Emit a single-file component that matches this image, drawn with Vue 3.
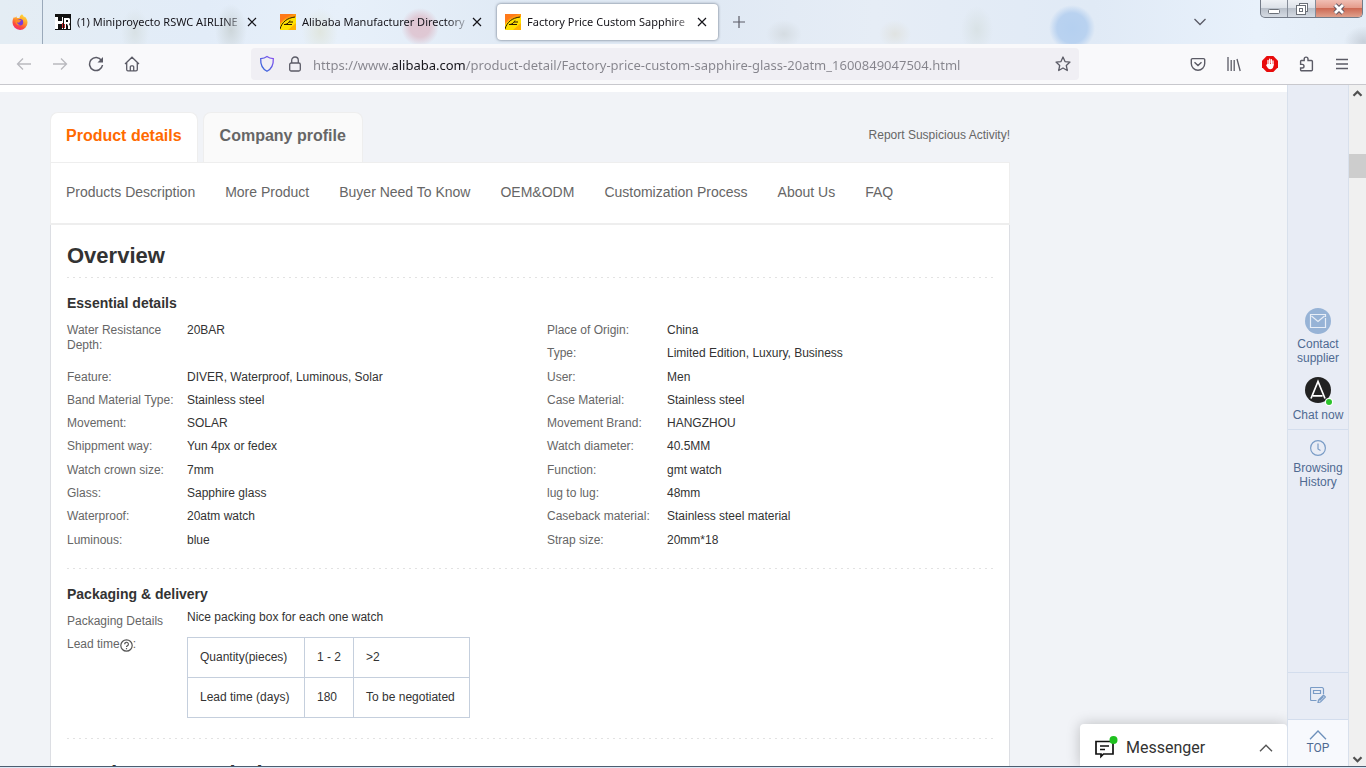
<script setup>
import { ref } from 'vue'

const tabs = [
  { title: '(1) Miniproyecto RSWC AIRLINE', icon: 'hr', active: false },
  { title: 'Alibaba Manufacturer Directory', icon: 'ali', active: false },
  { title: 'Factory Price Custom Sapphire', icon: 'ali', active: true },
]
const url = ref('https://www.alibaba.com/product-detail/Factory-price-custom-sapphire-glass-20atm_1600849047504.html')

const sections = ['Products Description', 'More Product', 'Buyer Need To Know', 'OEM&ODM', 'Customization Process', 'About Us', 'FAQ']

const leftSpecs = [
  ['Water Resistance Depth:', '20BAR', true],
  ['Feature:', 'DIVER, Waterproof, Luminous, Solar'],
  ['Band Material Type:', 'Stainless steel'],
  ['Movement:', 'SOLAR'],
  ['Shippment way:', 'Yun 4px or fedex'],
  ['Watch crown size:', '7mm'],
  ['Glass:', 'Sapphire glass'],
  ['Waterproof:', '20atm watch'],
  ['Luminous:', 'blue'],
]
const rightSpecs = [
  ['Place of Origin:', 'China'],
  ['Type:', 'Limited Edition, Luxury, Business'],
  ['User:', 'Men'],
  ['Case Material:', 'Stainless steel'],
  ['Movement Brand:', 'HANGZHOU'],
  ['Watch diameter:', '40.5MM'],
  ['Function:', 'gmt watch'],
  ['lug to lug:', '48mm'],
  ['Caseback material:', 'Stainless steel material'],
  ['Strap size:', '20mm*18'],
]
</script>

<template>
  <div class="window">
    <header class="tabstrip">
      <button class="view" aria-label="Firefox View">
        <svg width="16" height="16" viewBox="0 0 16 16">
          <defs>
            <linearGradient id="fox" x1="0.8" y1="0" x2="0.3" y2="1">
              <stop offset="0" stop-color="#ffe23c" />
              <stop offset="0.45" stop-color="#ff9a2a" />
              <stop offset="0.75" stop-color="#ff4a3c" />
              <stop offset="1" stop-color="#f02a78" />
            </linearGradient>
          </defs>
          <path d="M10 0.3c1 .8 1.800 1.900 2 2.900.5-.1.700-.4.700-.8 1.700 1.500 2.800 3.600 2.800 6A7.500 7.500 0 0 1 .5 8.500c0-2.300.6-4.200 1.700-5.700l.5 1.400C3.400 3.300 4 2.800 4.600 2.600l.2 1.500c1-.3 1.800-.2 2.600.1C7.600 2.400 8.700 1 10 .3z" fill="url(#fox)" />
          <circle cx="8" cy="8.200" r="3.200" fill="#7a3bd8" />
          <path d="M3.500 6c1.200-.9 2.600-1 4-.2 1.200.2 1.700.7 1.800 1.200-1 .2-1.500.4-1.700 1.200-.8.6-2 .6-2.600-.1.200 1.900 1.500 2.800 3.200 2.800-2.600 1.400-5.300-1-4.700-4.900z" fill="#ff8a28" />
        </svg>
      </button>
      <div class="tabs">
        <div v-for="tab in tabs" :key="tab.title" class="tab" :class="{ active: tab.active }">
          <svg v-if="tab.icon === 'hr'" width="16" height="16" viewBox="0 0 16 16">
            <path d="M0 0h16v16H0z" fill="#111" />
            <path d="M0 3h3v4h4V3h1v12H7v-5H3v5H0z" fill="#fff" />
            <path d="M9 4h5l1 1v4l-1 1 1 2v3h-2v-3l-1-2h-1v5H9zM11 6v2h2V6z" fill="#fff" fill-rule="evenodd" />
            <path d="M7 9h1v5H7zM9 10h1v4H9z" fill="#c22f2f" />
          </svg>
          <svg v-else width="16" height="16" viewBox="0 0 16 16">
            <path d="M0 0h16v16H0z" fill="#ff9810" />
            <path d="M0 16V11C3 6 9 3 16 3v13z" fill="#ffe000" />
            <path d="M0 0h14C8 2 3 5 0 9z" fill="#ff7a1a" />
            <path d="M16 9v7H8z" fill="#ffb400" />
            <path d="M0 15C2 8 7 4 15 3M4 10.500h8M5 10.500C8 10 9 8 10 6.500M9 8h4" fill="none" stroke="#2a1600" stroke-width="1" />
          </svg>
          <span class="title">{{ tab.title }}</span>
          <button class="close" :aria-label="'Close ' + tab.title">
            <svg width="10" height="10" viewBox="0 0 10 10"><path d="M1 1l8 8M9 1L1 9" stroke="#15141a" stroke-width="1.200" /></svg>
          </button>
        </div>
        <button class="plus" aria-label="New tab">
          <svg width="12" height="12" viewBox="0 0 12 12"><path d="M6 0v12M0 6h12" stroke="#5b5b66" stroke-width="1.200" /></svg>
        </button>
      </div>
      <button class="all" aria-label="List all tabs">
        <svg width="14" height="8" viewBox="0 0 14 8"><path d="M1.500 1L7 6.500 12.500 1" fill="none" stroke="#5b5b66" stroke-width="1.300" /></svg>
      </button>
      <div class="controls">
        <button aria-label="Minimize">
          <svg width="14" height="14" viewBox="0 0 14 14"><rect x="1.500" y="7.500" width="11" height="4" rx="1" fill="#fff" stroke="#6b7078" /></svg>
        </button>
        <button aria-label="Restore">
          <svg width="14" height="14" viewBox="0 0 14 14"><g fill="#fff" stroke="#6b7078"><rect x="4.500" y="1.500" width="8" height="8" /><rect x="1.500" y="3.500" width="9" height="9" /><rect x="4.500" y="6.500" width="3" height="3" /></g></svg>
        </button>
        <button class="exit" aria-label="Close window">
          <svg width="14" height="12" viewBox="0 0 14 12"><path d="M3 2l8 8M11 2l-8 8" stroke="#5f5560" stroke-width="4.600" /><path d="M3 2l8 8M11 2l-8 8" stroke="#fff" stroke-width="2.800" /></svg>
        </button>
      </div>
    </header>

    <nav class="toolbar" aria-label="Browser toolbar">
      <div class="group">
        <button aria-label="Back"><svg width="16" height="16" viewBox="0 0 16 16" class="dim"><path d="M15 8H1.500M7 2.500L1.500 8 7 13.500" /></svg></button>
        <button aria-label="Forward"><svg width="16" height="16" viewBox="0 0 16 16" class="dim"><path d="M1 8h13.500M9 2.500L14.500 8 9 13.500" /></svg></button>
        <button aria-label="Reload"><svg width="16" height="16" viewBox="0 0 16 16"><path d="M13.500 4.500A6.500 6.500 0 1 0 14.500 9" stroke-width="1.500" /><path d="M15 1v5.500H9.500z" fill="#5b5b66" stroke="none" /></svg></button>
        <button aria-label="Home"><svg width="16" height="16" viewBox="0 0 16 16"><path d="M1 8L8 1.200 15 8M2.700 6.500v7a1.300 1.300 0 0 0 1.300 1.300h8a1.300 1.300 0 0 0 1.300-1.300v-7M6.300 14.500v-3.700a1 1 0 0 1 1-1h1.400a1 1 0 0 1 1 1v3.700" /></svg></button>
      </div>
      <div class="address">
        <svg width="16" height="18" viewBox="0 0 16 18"><defs><linearGradient id="shield" x1="0" y1="1" x2="1" y2="0"><stop offset="0" stop-color="#2a6ad8" /><stop offset="1" stop-color="#8a50f0" /></linearGradient></defs><path d="M8 1.500C10 3 12 3.500 14.300 3.700c.3 6-1.500 10-6.300 12.600C3.200 13.700 1.400 9.700 1.700 3.700 4 3.500 6 3 8 1.500z" style="stroke: url(#shield)" /></svg>
        <svg width="14" height="16" viewBox="0 0 14 16"><rect x="1.700" y="7" width="10.600" height="8" rx="1.500" /><path d="M3.700 7V4.300a3.300 3.300 0 0 1 6.600 0V7" /></svg>
        <input v-model="url" type="text" aria-label="Address" spellcheck="false" />
        <button aria-label="Bookmark this page"><svg width="16" height="16" viewBox="0 0 16 16"><path d="M8 1l2 4.600 5 .5-3.700 3.400 1 5L8 12l-4.300 2.500 1-5L1 6.100l5-.5z" stroke-linejoin="round" /></svg></button>
      </div>
      <div class="group">
        <button aria-label="Save to Pocket"><svg width="16" height="16" viewBox="0 0 16 16"><path d="M2.500 2.600h11a1.200 1.200 0 0 1 1.200 1.200V7.500a6.700 6.700 0 0 1-13.400 0V3.800a1.200 1.200 0 0 1 1.200-1.200zM4.500 6.200L8 9.500l3.500-3.300" stroke-width="1.400" /></svg></button>
        <button aria-label="Library"><svg width="16" height="16" viewBox="0 0 16 16"><path d="M2 1v14M5.200 4v11M8.200 4v11M11 3l3.200 12" /></svg></button>
        <button aria-label="Ad blocker"><svg width="16" height="16" viewBox="0 0 16 16"><path d="M4.700 0h6.600L16 4.700v6.600L11.300 16H4.700L0 11.300V4.700z" fill="#e80c0c" stroke="none" /><path d="M6 9V4.500M7.700 8V3.200M9.400 8V3.700M11 9V5" stroke="#fff" stroke-width="1.300" stroke-linecap="round" /><path d="M5.400 8h6.200c0 3-.6 5.200-3.200 5.200-2 0-3-1.400-4.400-4.200z" fill="#fff" stroke="none" /></svg></button>
        <button aria-label="Extensions"><svg width="16" height="16" viewBox="0 0 16 16"><path d="M2.600 7.500V5.300a.8.8 0 0 1 .8-.8h2.800V3a1.900 1.900 0 0 1 3.800 0v1.500h3.400a1 1 0 0 1 1 1v8.300a1 1 0 0 1-1 1H3.600a1 1 0 0 1-1-1V12h1.600a1.800 1.800 0 0 0 0-3.600H2.600z" stroke-width="1.400" /></svg></button>
        <button aria-label="Menu"><svg width="16" height="16" viewBox="0 0 16 16"><path d="M2 3.500h12M2 8h12M2 12.500h12" /></svg></button>
      </div>
    </nav>

    <div class="viewport">
      <main class="page">
        <div class="strip"></div>
        <div class="product">
          <div class="heads">
            <button class="head on">Product details</button>
            <button class="head">Company profile</button>
            <a href="#report" class="report">Report Suspicious Activity!</a>
          </div>
          <nav class="sections" aria-label="Product sections">
            <a v-for="s in sections" :key="s" href="#overview">{{ s }}</a>
          </nav>
          <article class="details">
            <h1>Overview</h1>
            <hr />
            <h2>Essential details</h2>
            <div class="specs">
              <dl>
                <div v-for="[name, value, tall] in leftSpecs" :key="name" class="spec" :class="{ tall }">
                  <dt>{{ name }}</dt><dd>{{ value }}</dd>
                </div>
              </dl>
              <dl>
                <div v-for="[name, value] in rightSpecs" :key="name" class="spec">
                  <dt>{{ name }}</dt><dd>{{ value }}</dd>
                </div>
              </dl>
            </div>
            <hr />
            <h2 class="packing">Packaging &amp; delivery</h2>
            <div class="pack">
              <span class="label">Packaging Details</span>
              <span>Nice packing box for each one watch</span>
            </div>
            <div class="lead">
              <span class="label">Lead time<svg width="13" height="13" viewBox="0 0 13 13"><circle cx="6.500" cy="6.500" r="5.700" fill="none" stroke="#555" stroke-width="1.200" /><path d="M4.600 5.200a1.900 1.900 0 1 1 2.700 1.700c-.6.3-.8.6-.8 1.200M6.500 9v1.300" fill="none" stroke="#555" stroke-width="1.200" /></svg>:</span>
              <table>
                <tbody>
                  <tr><td>Quantity(pieces)</td><td>1 - 2</td><td>&gt;2</td></tr>
                  <tr><td>Lead time (days)</td><td>180</td><td>To be negotiated</td></tr>
                </tbody>
              </table>
            </div>
            <hr />
            <h1 class="next">Products Description</h1>
          </article>
        </div>
        <button class="messenger">
          <svg width="24" height="24" viewBox="0 0 24 24"><path d="M2 5.500h17V18H9.500L7 20.500V18H2zM6 10h9M6 13.500h5" fill="none" stroke="#111" stroke-width="1.700" /><circle cx="19.500" cy="4" r="4" fill="#1fc11f" /></svg>
          <span>Messenger</span>
          <svg width="14" height="8" viewBox="0 0 14 8"><path d="M1 7.300L7 1.300l6 6" fill="none" stroke="#555" stroke-width="1.400" /></svg>
        </button>
      </main>

      <aside class="rail">
        <a href="#contact" class="contact">
          <svg width="26" height="26" viewBox="0 0 26 26"><circle cx="13" cy="13" r="13" fill="#97b3d6" /><path d="M20.500 10v9.500h-15v-13h15V9M6.500 8l6.500 5.500L19.500 8" fill="none" stroke="#e8eef7" stroke-width="1.200" /></svg>
          Contact supplier
        </a>
        <a href="#chat" class="chat">
          <svg width="30" height="29" viewBox="0 0 30 29"><circle cx="15" cy="13" r="13" fill="#222" /><path d="M8 21.500L15 4.500l7 17M10 18.800h9.500" fill="none" stroke="#fff" stroke-width="1.700" /><circle cx="26" cy="25" r="4" fill="#fff" /><circle cx="26" cy="25" r="3" fill="#2cc32c" /></svg>
          Chat now
        </a>
        <a href="#history" class="history">
          <svg width="16" height="16" viewBox="0 0 16 16"><circle cx="8" cy="8" r="7.400" fill="none" stroke="#7a9cc6" stroke-width="1.200" /><path d="M8 3.500V9l2.500 1.500" fill="none" stroke="#7a9cc6" stroke-width="1.200" /></svg>
          Browsing History
        </a>
        <a href="#feedback" class="note" aria-label="Feedback">
          <svg width="16" height="16" viewBox="0 0 16 16"><path d="M6.500 13.500h-5a1 1 0 0 1-1-1v-11a1 1 0 0 1 1-1h10.500a2 2 0 0 1 1.500 1.500V7M3.500 3.500h7v3h-7zM8 15.500l.5-2.500 5-5 2 2-5 5zM9.500 13.500l4-4" fill="none" stroke="#7a9cc6" stroke-width="1.200" /></svg>
        </a>
        <a href="#top" class="top">
          <svg width="18" height="10" viewBox="0 0 18 10"><path d="M1 9.300L9 1l8 8.300" fill="none" stroke="#6d90bb" stroke-width="1.300" /></svg>
          TOP
        </a>
      </aside>

      <div class="scroll" aria-hidden="true">
        <svg width="11" height="7" viewBox="0 0 11 7"><path d="M1.500 5.800l4-4 4 4" fill="none" stroke="#505050" stroke-width="2.200" /></svg>
        <div class="thumb"></div>
        <svg width="11" height="7" viewBox="0 0 11 7"><path d="M1.500 1.200l4 4 4-4" fill="none" stroke="#505050" stroke-width="2.200" /></svg>
      </div>
    </div>
    <footer class="edge"></footer>
  </div>
</template>

<style>
body {
  margin: 0;
  overflow: hidden;
}
</style>

<style scoped>
.window {
  height: 100vh;
  display: flex;
  flex-direction: column;
  overflow: hidden;
  font: 12px/15px "Liberation Sans", Arial, sans-serif;
  color: #333;
}
.window * {
  box-sizing: border-box;
}
button {
  font: inherit;
  color: inherit;
  border: 0;
  padding: 0;
  background: none;
}
a {
  color: inherit;
  text-decoration: none;
}
svg {
  flex: none;
}

.tabstrip {
  flex: none;
  height: 44px;
  display: flex;
  font: 11px/16px "Noto Sans", "Open Sans", sans-serif;
  color: #15141a;
  background:
    radial-gradient(circle at 1072px 28px, #b5d0f0 0, #b9d2f0 15px, transparent 23px),
    radial-gradient(circle at 420px 27px, #dfc6d2 0, #dfc8d4 10px, transparent 19px),
    radial-gradient(ellipse 16px 26px at 231px 30px, #cdd6da 0, transparent 100%),
    radial-gradient(ellipse 14px 24px at 135px 32px, #d8e1e5 0, transparent 100%),
    radial-gradient(ellipse 18px 24px at 320px 32px, #e0e6e0 0, transparent 100%),
    radial-gradient(ellipse 18px 14px at 784px 34px, #d5dce2 0, transparent 100%),
    radial-gradient(ellipse 16px 14px at 895px 34px, #e0e3e2 0, transparent 100%),
    radial-gradient(ellipse 16px 24px at 977px 30px, #d9e2e6 0, transparent 100%),
    radial-gradient(ellipse 20px 16px at 1364px 42px, #c8d0da 0, transparent 100%),
    linear-gradient(90deg, #e4edf4 0, #e2ecf8 15%, #e7f0fa 25%, #dfe9f4 40%, #e0e9f4 52%, #e6edf6 64%, #e0eaf6 80%, #e8f1fb 92%, #e4edf7 100%);
}
.view {
  flex: none;
  width: 43px;
  padding: 0 3px 0 0;
  border-right: 1px solid #9aa9ba;
  display: flex;
  align-items: center;
  justify-content: center;
}
.tabs {
  flex: 1;
  min-width: 0;
  display: flex;
  gap: 4px;
  padding: 4px;
}
.tab {
  flex: 0 1 221px;
  min-width: 0;
  height: 36px;
  padding: 0 11px 0 8px;
  border-radius: 4px;
  display: flex;
  align-items: center;
}
.tab.active {
  background: #fff;
  box-shadow: 0 0 3px #5f6a7a;
}
.title {
  flex: 1;
  min-width: 0;
  margin-left: 6px;
  overflow: hidden;
  white-space: nowrap;
  mask-image: linear-gradient(to left, transparent 0, #000 24px);
}
.close {
  flex: none;
  width: 10px;
  height: 16px;
  display: flex;
  align-items: center;
}
.plus {
  flex: none;
  width: 34px;
  height: 36px;
  display: flex;
  align-items: center;
  justify-content: center;
}
.all {
  flex: none;
  width: 36px;
  margin-right: 42px;
}
.controls {
  flex: none;
  width: 103px;
  height: 18px;
  margin-right: 3px;
  display: flex;
  border: 1px solid #737b88;
  border-top: 0;
  border-radius: 0 0 5px 5px;
  overflow: hidden;
  background: linear-gradient(#eef1f5 0, #dde2e9 45%, #b9c0ca 50%, #d5dbe3 100%);
}
.controls button {
  flex: 27;
  display: flex;
  align-items: center;
  justify-content: center;
  border-right: 1px solid #858c98;
}
.controls .exit {
  flex: 47;
  border: 0;
  background: linear-gradient(#f0bfb4 0, #e59c8c 45%, #cd6a54 50%, #e0a08c 100%);
}

.toolbar {
  flex: none;
  height: 41px;
  padding: 0 6px;
  display: flex;
  align-items: center;
  background: #f9f9fb;
  border-bottom: 1px solid #c8c8cd;
}
.toolbar svg {
  fill: none;
  stroke: #5b5b66;
  stroke-width: 1.3;
}
.toolbar .dim {
  stroke: #b9b9be;
}
.group {
  flex: none;
  display: flex;
}
.group button {
  width: 36px;
  height: 32px;
  display: flex;
  align-items: center;
  justify-content: center;
}
.address {
  flex: 1;
  min-width: 0;
  height: 32px;
  margin: 0 101px;
  padding: 0 8px;
  display: flex;
  align-items: center;
  gap: 13px;
  border-radius: 4px;
  background: #f0eff4;
}
.address input {
  flex: 1;
  min-width: 0;
  height: 24px;
  margin-left: -2px;
  padding: 1px 0 0;
  border: 0;
  outline: 0;
  font: 13px/23px "Noto Sans", "Open Sans", sans-serif;
  color: transparent;
  caret-color: #15141a;
  background: linear-gradient(90deg, #85848c 79px, #15141a 79px, #15141a 153px, #85848c 153px) text;
}
.address button {
  display: flex;
}

.viewport {
  flex: 1;
  min-height: 0;
  display: flex;
}
.page {
  position: relative;
  flex: 1;
  min-width: 0;
  overflow: hidden;
  background: #f1f3f7;
}
.strip {
  height: 7px;
  background: #fff;
}
.product {
  max-width: 960px;
  margin: 20px 0 0 50px;
}
.heads {
  display: flex;
  gap: 5px;
}
.head {
  height: 50px;
  padding: 0 16px 4px;
  border: 1px solid #eee;
  border-bottom: 0;
  border-radius: 8px 8px 0 0;
  font-size: 16px;
  font-weight: bold;
  color: #666;
  background: #fafafa;
}
.head.on {
  padding: 0 15px 4px;
  color: #ff6a00;
  background: #fff;
}
.report {
  margin: 16px 0 0 auto;
  color: #666;
}
.sections {
  height: 63px;
  padding: 0 15px 2px;
  display: flex;
  align-items: center;
  gap: 30px;
  font-size: 14px;
  color: #666;
  background: #fff;
  border: 1px solid #eee;
  border-bottom-width: 2px;
}
.details {
  padding: 17px 16px 0;
  background: #fff;
  border: 1px solid #dcdee3;
  border-width: 0 1px;
}
h1 {
  margin: 0;
  font-size: 22px;
  line-height: 28px;
}
h2 {
  margin: 17px 0 12px;
  font-size: 14px;
  line-height: 16px;
}
hr {
  height: 1px;
  margin: 7px 0 0;
  border: 0;
  background: repeating-linear-gradient(90deg, #e2e2e2 0, #e2e2e2 2px, transparent 2px, transparent 6px);
}
.specs {
  display: grid;
  grid-template-columns: 480px 1fr;
}
.specs dl {
  min-height: 233px;
  margin: 0;
  display: grid;
  grid-template-rows: repeat(10, 1fr);
}
.specs + hr {
  margin-top: 12px;
}
.spec {
  display: grid;
  grid-template-columns: 110px 1fr;
  column-gap: 10px;
  align-items: start;
}
.spec.tall {
  grid-row: span 2;
}
dt,
.label {
  color: #666;
}
dd {
  margin: 0;
}
.packing {
  margin-bottom: 8px;
}
.pack,
.lead {
  display: grid;
  grid-template-columns: 110px 1fr;
  column-gap: 10px;
}
.pack .label {
  padding-top: 4px;
}
.lead {
  margin-top: 8px;
  align-items: start;
}
.lead svg {
  vertical-align: -4px;
}
table {
  justify-self: start;
  border-collapse: collapse;
}
td {
  height: 40px;
  padding: 0 12px;
  border: 1px solid #c5cfdd;
}
td:first-child {
  width: 117px;
}
td:last-child {
  width: 116px;
}
.lead + hr {
  margin-top: 20px;
}
.next {
  padding-top: 21px;
}

.messenger {
  position: absolute;
  right: 0;
  bottom: 0;
  width: 207px;
  height: 42px;
  padding: 5px 14px 0;
  display: flex;
  align-items: center;
  gap: 8px;
  border-radius: 4px 4px 0 0;
  background: #fff;
  box-shadow: 0 0 14px rgba(0, 0, 0, 0.22);
  font: 16px/20px Roboto, sans-serif;
}
.messenger span {
  flex: 1;
  text-align: left;
}

.rail {
  flex: none;
  width: 62px;
  padding-top: 223px;
  display: flex;
  flex-direction: column;
  border: 1px solid #d8e0ec;
  border-width: 0 1px;
  line-height: 14px;
  text-align: center;
  color: #4f6a92;
  background: #e8ecf5;
}
.rail a {
  display: flex;
  flex-direction: column;
  align-items: center;
}
.contact {
  gap: 3px;
}
.chat {
  gap: 2px;
  margin-top: 12px;
  padding-bottom: 7px;
  border-bottom: 1px solid #d3dded;
}
.history {
  gap: 5px;
  margin-top: 10px;
}
.rail .note {
  margin-top: auto;
  height: 48px;
  padding-bottom: 2px;
  justify-content: center;
  border: 1px solid #d3dded;
  border-width: 1px 0;
}
.rail .top {
  height: 46px;
  padding-top: 10px;
  gap: 1px;
  font-family: Roboto, sans-serif;
  background: #f7f9fd;
}

.scroll {
  flex: none;
  width: 17px;
  padding: 5px 0 3px;
  display: flex;
  flex-direction: column;
  align-items: center;
  background: #f0f0f0;
}
.thumb {
  width: 17px;
  height: 24px;
  margin: 57px 0 auto;
  background: #cdcdcd;
}
.edge {
  flex: none;
  height: 2px;
  background: #dce8f6;
  border-top: 1px solid #4d5d70;
}
</style>
